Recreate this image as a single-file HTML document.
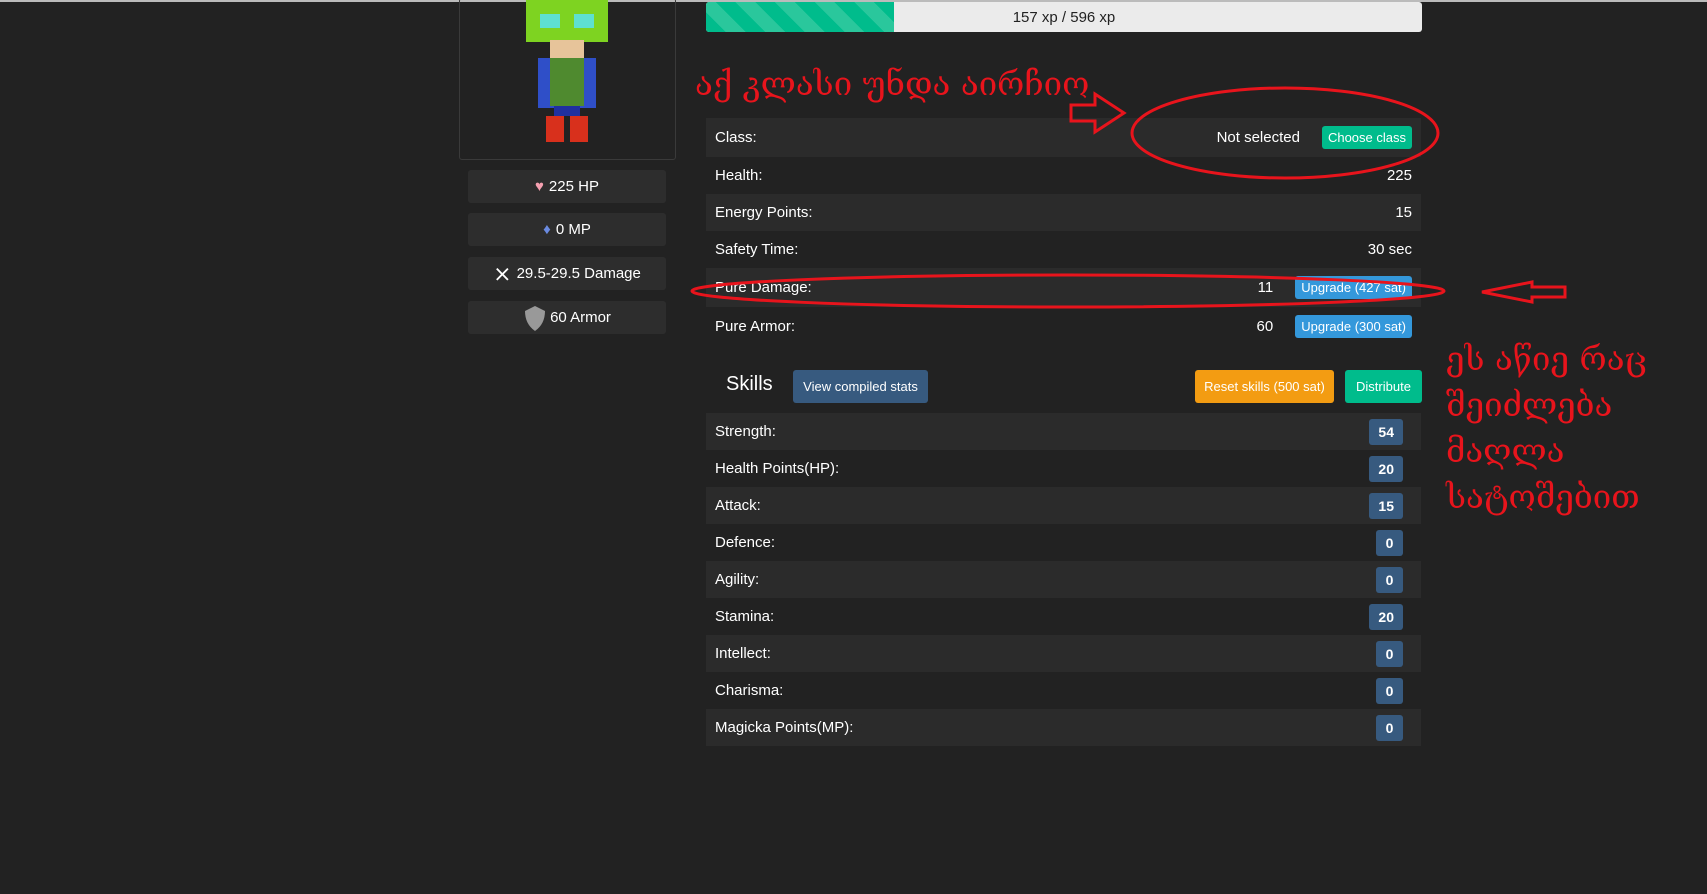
<!DOCTYPE html>
<html><head><meta charset="utf-8"><style>
*{margin:0;padding:0;box-sizing:border-box}
body{width:1707px;height:894px;background:#222;overflow:hidden;position:relative;font-family:"Liberation Sans",sans-serif;color:#fff;font-size:15px}
.a{position:absolute}
.stat{position:absolute;left:468px;width:198px;height:33px;background:#2d2d2d;border-radius:3px;display:flex;align-items:center;justify-content:center;font-size:15px}
.row{position:absolute;left:706px;width:715px;height:37px;display:flex;align-items:center;padding:0 9px}
.row.s{background:#2b2b2b}
.row .v{margin-left:auto}
.btn{position:absolute;border-radius:3px;color:#fff;font-size:13px;display:flex;align-items:center;justify-content:center}
.badge{margin-left:auto;margin-right:9px;background:#375a7f;border-radius:3px;font-weight:bold;font-size:14px;height:26px;min-width:27px;padding:0 9px;display:flex;align-items:center;justify-content:center}
.geo{position:absolute;color:#e8141c;font-family:"DejaVu Serif","DejaVu Sans",serif;font-size:33px;white-space:nowrap}
</style></head><body>
<div class="a" style="left:0;top:0;width:1707px;height:2px;background:#bbb"></div>
<div class="a" style="left:459px;top:-2px;width:217px;height:162px;border:1px solid #3a3a3a;border-radius:3px"></div>
<svg class="a" style="left:520px;top:0" width="100" height="145">
<rect x="6" y="0" width="82" height="42" fill="#7ed321"/>
<rect x="20" y="14" width="20" height="14" fill="#5ee0d0"/><rect x="54" y="14" width="20" height="14" fill="#5ee0d0"/>
<rect x="30" y="40" width="34" height="18" fill="#e7c49a"/>
<rect x="18" y="58" width="58" height="50" fill="#2f4fc8"/>
<rect x="30" y="58" width="34" height="48" fill="#4f8a2f"/>
<rect x="34" y="106" width="26" height="10" fill="#2030a0"/>
<rect x="26" y="116" width="18" height="26" fill="#d8301c"/><rect x="50" y="116" width="18" height="26" fill="#d8301c"/>
</svg>
<div class="stat" style="top:170px"><span style="color:#f5a0b0;margin-right:5px">♥</span>225 HP</div>
<div class="stat" style="top:213px"><span style="color:#6a8ae0;margin-right:5px">♦</span>0 MP</div>
<div class="stat" style="top:257px"><span style="margin-right:5px;font-size:22px">⨯</span>29.5-29.5 Damage</div>
<div class="stat" style="top:301px"><svg width="24" height="28" style="margin-right:3px"><path d="M12 2 L22 7 Q22 20 12 27 Q2 20 2 7 Z" fill="#999"/></svg>60 Armor</div>

<div class="a" style="left:706px;top:2px;width:716px;height:30px;background:#ebebeb;border-radius:3px;overflow:hidden">
<div style="width:188px;height:30px;background:repeating-linear-gradient(45deg,#00bc8c 0 14px,#2ac79c 14px 28px)"></div>
<div class="a" style="left:0;top:0;width:716px;height:30px;display:flex;align-items:center;justify-content:center;color:#222;font-size:15px">157 xp / 596 xp</div>
</div>

<div class="row s" style="top:118px;height:39px">Class:<span class="v" style="margin-right:22px">Not selected</span><span style="background:#00bc8c;font-size:13px;padding:4px 6px;border-radius:3px">Choose class</span></div>
<div class="row" style="top:157px">Health:<span class="v">225</span></div>
<div class="row s" style="top:194px">Energy Points:<span class="v">15</span></div>
<div class="row" style="top:231px">Safety Time:<span class="v">30 sec</span></div>
<div class="row s" style="top:268px;height:39px">Pure Damage:<span class="v" style="margin-right:22px">11</span><span style="background:#3498db;font-size:13px;padding:4px 6px;border-radius:3px">Upgrade (427 sat)</span></div>
<div class="row" style="top:308px">Pure Armor:<span class="v" style="margin-right:22px">60</span><span style="background:#3498db;font-size:13px;padding:4px 6px;border-radius:3px">Upgrade (300 sat)</span></div>

<div class="a" style="left:726px;top:373px;font-size:20px">Skills</div>
<div class="btn" style="left:793px;top:370px;width:135px;height:33px;background:#375a7f">View compiled stats</div>
<div class="btn" style="left:1195px;top:370px;width:139px;height:33px;background:#f39c12">Reset skills (500 sat)</div>
<div class="btn" style="left:1345px;top:370px;width:77px;height:33px;background:#00bc8c">Distribute</div>

<div class="row s" style="top:413px">Strength:<span class="badge">54</span></div>
<div class="row" style="top:450px">Health Points(HP):<span class="badge">20</span></div>
<div class="row s" style="top:487px">Attack:<span class="badge">15</span></div>
<div class="row" style="top:524px">Defence:<span class="badge">0</span></div>
<div class="row s" style="top:561px">Agility:<span class="badge">0</span></div>
<div class="row" style="top:598px">Stamina:<span class="badge">20</span></div>
<div class="row s" style="top:635px">Intellect:<span class="badge">0</span></div>
<div class="row" style="top:672px">Charisma:<span class="badge">0</span></div>
<div class="row s" style="top:709px">Magicka Points(MP):<span class="badge">0</span></div>

<div class="geo" style="left:695px;top:64px">აქ კლასი უნდა აირჩიო</div>
<div class="geo" style="left:1446px;top:336px;line-height:46px">ეს აწიე რაც<br>შეიძლება<br>მაღლა<br>სატოშებით</div>
<svg class="a" style="left:0;top:0" width="1707" height="894" fill="none" stroke="#e8141c" stroke-width="3">
<ellipse cx="1285" cy="133" rx="153" ry="45"/>
<ellipse cx="1068" cy="291" rx="376" ry="16"/>
<path d="M1071 105 L1095 105 L1095 94 L1124 113 L1095 132 L1095 121 L1071 121 Z"/>
<path d="M1565 287 L1532 287 L1532 282 L1482 292 L1532 302 L1532 297 L1565 297 Z"/>
</svg>
</body></html>
